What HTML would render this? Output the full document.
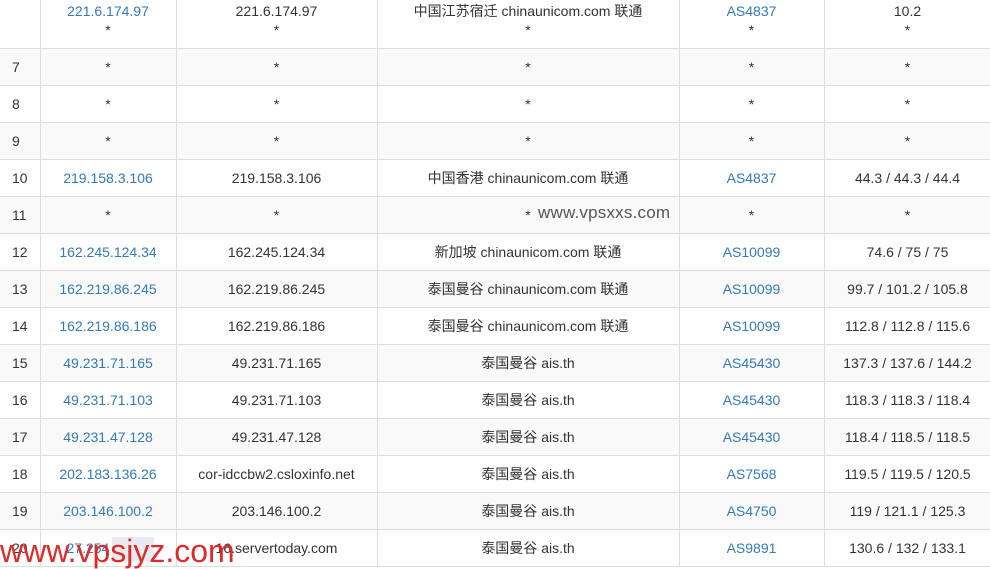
<!DOCTYPE html>
<html><head><meta charset="utf-8"><style>
body{margin:0;width:990px;height:569px;overflow:hidden;background:#fff;font-family:"Liberation Sans","Noto Sans CJK SC",sans-serif;font-size:14px;color:#333;position:relative}
table{border-collapse:collapse;table-layout:fixed;position:absolute;left:0;top:0;width:991px}
td{border:1px solid #ddd;height:36px;padding:0;text-align:center;vertical-align:middle;white-space:nowrap;overflow:hidden}
td:first-child{text-align:left;padding-left:12px;border-left:none}
tr.s td{background:#f9f9f9}
.l{color:#337ab7}
tr.f td{height:46px;border-top:none;vertical-align:top;line-height:19px;padding-top:2px}
.wm{position:absolute;left:538px;top:203px;color:#555;font-size:17px;letter-spacing:0.2px}
.red{position:absolute;left:0;top:533px;color:#e02a2a;font-size:32px;line-height:36px}
.blur{position:absolute;left:112px;top:537px;width:42px;height:24px;background:#dfe6ee;opacity:.8}
</style></head><body>
<table>
<colgroup><col style="width:40px"><col style="width:136px"><col style="width:201px"><col style="width:302px"><col style="width:145px"><col style="width:167px"></colgroup>
<tr class="f"><td></td><td class="l">221.6.174.97<br><span style="color:#333">*</span></td><td>221.6.174.97<br>*</td><td>中国江苏宿迁 chinaunicom.com 联通<br>*</td><td class="l">AS4837<br><span style="color:#333">*</span></td><td>10.2<br>*</td></tr>
<tr class="s"><td>7</td><td>*</td><td>*</td><td>*</td><td>*</td><td>*</td></tr>
<tr><td>8</td><td>*</td><td>*</td><td>*</td><td>*</td><td>*</td></tr>
<tr class="s"><td>9</td><td>*</td><td>*</td><td>*</td><td>*</td><td>*</td></tr>
<tr><td>10</td><td class="l">219.158.3.106</td><td>219.158.3.106</td><td>中国香港 chinaunicom.com 联通</td><td class="l">AS4837</td><td>44.3 / 44.3 / 44.4</td></tr>
<tr class="s"><td>11</td><td>*</td><td>*</td><td>*</td><td>*</td><td>*</td></tr>
<tr><td>12</td><td class="l">162.245.124.34</td><td>162.245.124.34</td><td>新加坡 chinaunicom.com 联通</td><td class="l">AS10099</td><td>74.6 / 75 / 75</td></tr>
<tr class="s"><td>13</td><td class="l">162.219.86.245</td><td>162.219.86.245</td><td>泰国曼谷 chinaunicom.com 联通</td><td class="l">AS10099</td><td>99.7 / 101.2 / 105.8</td></tr>
<tr><td>14</td><td class="l">162.219.86.186</td><td>162.219.86.186</td><td>泰国曼谷 chinaunicom.com 联通</td><td class="l">AS10099</td><td>112.8 / 112.8 / 115.6</td></tr>
<tr class="s"><td>15</td><td class="l">49.231.71.165</td><td>49.231.71.165</td><td>泰国曼谷 ais.th</td><td class="l">AS45430</td><td>137.3 / 137.6 / 144.2</td></tr>
<tr><td>16</td><td class="l">49.231.71.103</td><td>49.231.71.103</td><td>泰国曼谷 ais.th</td><td class="l">AS45430</td><td>118.3 / 118.3 / 118.4</td></tr>
<tr class="s"><td>17</td><td class="l">49.231.47.128</td><td>49.231.47.128</td><td>泰国曼谷 ais.th</td><td class="l">AS45430</td><td>118.4 / 118.5 / 118.5</td></tr>
<tr><td>18</td><td class="l">202.183.136.26</td><td>cor-idccbw2.csloxinfo.net</td><td>泰国曼谷 ais.th</td><td class="l">AS7568</td><td>119.5 / 119.5 / 120.5</td></tr>
<tr class="s"><td>19</td><td class="l">203.146.100.2</td><td>203.146.100.2</td><td>泰国曼谷 ais.th</td><td class="l">AS4750</td><td>119 / 121.1 / 125.3</td></tr>
<tr><td>20</td><td class="l" style="text-align:left;padding-left:26px">27.254</td><td>16.servertoday.com</td><td>泰国曼谷 ais.th</td><td class="l">AS9891</td><td>130.6 / 132 / 133.1</td></tr>
</table>
<div class="wm">www.vpsxxs.com</div>
<div class="blur"></div>
<div class="red">www.vpsjyz.com</div>
</body></html>
